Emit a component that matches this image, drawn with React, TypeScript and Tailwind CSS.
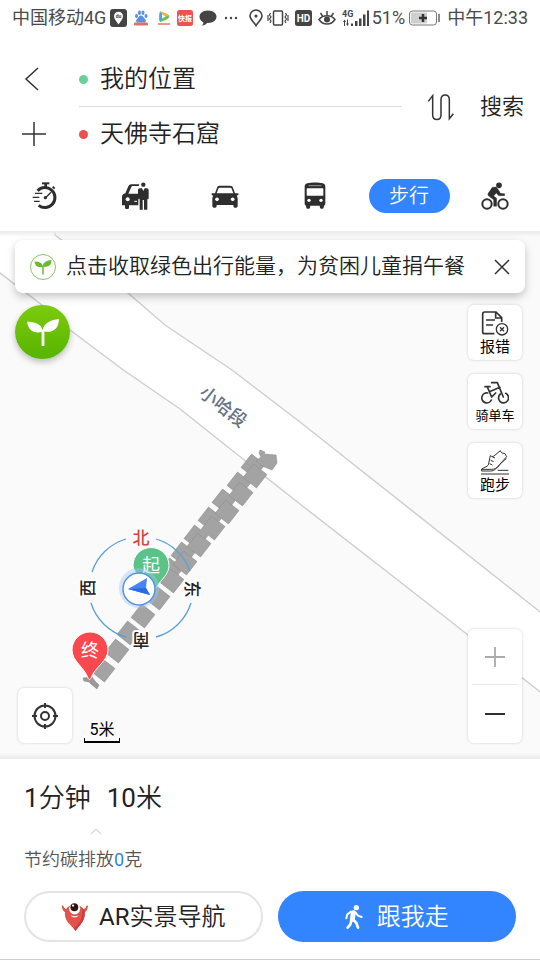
import type { ReactNode } from 'react';

const cjk = 'font-[Roboto,"Noto_Sans_CJK_SC",sans-serif]';

function StatusBar() {
  return (
    <div className="flex h-9 items-center pl-3 pr-3 text-lg leading-9 text-[#4a4a4a]">
      <span>中国移动4G</span>
      <svg className="ml-1 h-[18px] w-[17px]" viewBox="0 0 17 18">
        <rect width="17" height="18" rx="3" fill="#444" />
        <path d="M8.500 15.500C6.500 12 4 10 4 7.200a4.500 4.500 0 0 1 9 0C13 10 10.500 12 8.500 15.500Z" fill="#fff" />
        <text x="8.500" y="9" textAnchor="middle" fontSize="5" fontWeight="700" fill="#444">du</text>
      </svg>
      <svg className="ml-1.5 h-4 w-4" viewBox="0 0 16 16">
        <g fill="#5c8fe0">
          <ellipse cx="3.500" cy="6" rx="1.500" ry="2" />
          <ellipse cx="6.500" cy="2.800" rx="1.500" ry="2.200" />
          <ellipse cx="10" cy="2.800" rx="1.500" ry="2.200" />
          <ellipse cx="13" cy="6" rx="1.500" ry="2" />
          <path d="M8 5.500c2 0 2.500 2 4 3.500s1 3.500-1 3.500H5c-2 0-2.500-2-1-3.500S6 5.500 8 5.500Z" />
        </g>
        <rect x="1" y="12.500" width="14" height="3" rx="1" fill="#e2705f" />
      </svg>
      <svg className="ml-2 h-4 w-3.5" viewBox="0 0 14 16">
        <path d="M3 1.500C8 3 12 4.500 12.500 6.500 12 8.500 8 10.500 3 12c-1-3-1-7 0-10.500Z" fill="#63c04e" />
        <path d="M3 1.500C8 3 12 4.500 12.500 6.500L3 5Z" fill="#f0b04a" />
        <path d="M3 1.500c-1 3.500-1 7.500 0 10.500l2-4V4Z" fill="#4aa6e8" />
        <path d="M5 4.500v4L9 6.500Z" fill="#fff" />
        <rect x="1" y="13" width="12" height="2" fill="#ef9a86" />
      </svg>
      <svg className="ml-1.5 h-4 w-4" viewBox="0 0 16 16">
        <rect width="16" height="16" rx="2.500" fill="#ee5350" />
        <text x="8" y="11" textAnchor="middle" fontSize="7" fontWeight="700" fill="#fff">快报</text>
      </svg>
      <svg className="ml-1.5 h-4 w-[18px]" viewBox="0 0 18 16">
        <path d="M9 0.500c5 0 8.500 2.800 8.500 6.300S14 13 9 13H8c-1 1.500-3 2.600-5 2.500 1-1 1.500-2 1.300-3.300C2 11 .5 9.200.5 6.800.5 3.300 4 .5 9 .5Z" fill="#444" />
      </svg>
      <svg className="ml-1.5 h-1 w-4" viewBox="0 0 16 4" fill="#444">
        <circle cx="3" cy="2" r="1.200" />
        <circle cx="8" cy="2" r="1.200" />
        <circle cx="13" cy="2" r="1.200" />
      </svg>

      <svg className="ml-auto h-[18px] w-3.5" viewBox="0 0 14 18" fill="none" stroke="#444" strokeWidth="1.600">
        <path d="M7 16.500C4.500 12.500 1 10.500 1 7a6 6 0 0 1 12 0c0 3.500-3.500 5.500-6 9.500Z" />
        <circle cx="7" cy="7" r="1.600" fill="#444" stroke="none" />
      </svg>
      <svg className="ml-1 h-4 w-[22px]" viewBox="0 0 22 16" fill="none" stroke="#444" strokeWidth="1.500">
        <rect x="6.500" y="1" width="9" height="14" rx="1" />
        <path d="M3.500 3 2.500 5l1.500 2-1.500 2 1.500 2-1 2M1 5v6M18.500 3l1 2L18 7l1.500 2-1.500 2 1 2M21 5v6" strokeWidth="1.200" />
      </svg>
      <svg className="ml-1.5 h-4 w-[17px]" viewBox="0 0 17 16">
        <rect width="17" height="16" rx="2.500" fill="#444" />
        <text x="8.500" y="12" textAnchor="middle" fontSize="10" fontWeight="700" fill="#fff">HD</text>
      </svg>
      <svg className="ml-1.5 h-4 w-[18px]" viewBox="0 0 18 16" fill="none" stroke="#444" strokeWidth="1.500">
        <path d="M1 9.500C5 4.500 13 4.500 17 9.500 13 15.500 5 15.500 1 9.500ZM9 5V1M4.500 6 2.500 3M13.500 6l2-3" />
        <circle cx="9" cy="9.500" r="3" fill="#444" stroke="none" />
      </svg>
      <svg className="ml-1.5 h-[18px] w-7" viewBox="0 0 28 18" fill="#444">
        <text x="0" y="8" fontSize="9" fontWeight="700">4G</text>
        <path d="M1 13l1.500-2.500L4 13H3v4H2v-4ZM5 10.500h1v4h1L5.500 17 4 14.500h1ZM9 14.500h2V17H9ZM13 12h2.500v5H13ZM17 9.500h2.500V17H17ZM21 5.500h2.500V17H21ZM25 1.500h2V17h-2Z" />
      </svg>
      <span className="ml-0.5">51%</span>
      <svg className="ml-1 h-4 w-8" viewBox="0 0 32 16">
        <rect x="0.500" y="1" width="27" height="14" rx="3" fill="#fff" stroke="#777" />
        <rect x="2" y="2.500" width="16" height="11" rx="1" fill="#cfcfcf" />
        <path d="M14 4v8M10 8h8" stroke="#333" strokeWidth="2.500" />
        <path d="M30 4v8" stroke="#666" strokeWidth="1.500" />
      </svg>
      <span className="ml-1.5">中午12:33</span>
    </div>
  );
}

function TimerIcon() {
  return (
    <svg className="h-7 w-7" viewBox="93 397 84 84" fill="none" stroke="#2e2e2e">
      <path d="M113 423A30 30 0 1 1 116 467" strokeWidth="9" />
      <path d="M126 401h22" strokeWidth="6" />
      <path d="M137 402v10" strokeWidth="8" />
      <path d="M158 411l6 6" strokeWidth="6" />
      <path d="M137 444l16-16" strokeWidth="4" />
      <circle cx="136" cy="444" r="5" fill="#2e2e2e" stroke="none" />
      <path d="M105 431h22M98 443h20M102 455h17" strokeWidth="4" />
    </svg>
  );
}

function TaxiIcon() {
  return (
    <svg className="h-7 w-7" viewBox="360 397 84 84" fill="#2e2e2e">
      <path d="M415 404h-24c-5 0-7 2-9 6l-9 21c-6 2-10 5-10 11v25h9v8c0 4 12 4 12 0v-8h28V432h-30l9-20c1-2 2-3 4-3h18Z" />
      <circle cx="380" cy="449" r="6" fill="#fff" />
      <path d="M400 455h8" stroke="#fff" strokeWidth="3" />
      <circle cx="427" cy="405" r="6.500" />
      <path d="M417 416h6l4 8 4-8h6c4 0 6 2 6 6v24c0 4-4 4-4 0v34h-10v-29h-4v29h-9v-34c0 4-5 4-5 0v-24c0-4 2-6 6-6Z" />
    </svg>
  );
}

function CarIcon() {
  return (
    <svg className="h-7 w-7" viewBox="632 397 84 84" fill="#2e2e2e">
      <path fillRule="evenodd" d="M657 408h32c5 0 8 2 9 6l6 17h10v5l-5 2c2 3 3 5 3 9v21c0 8-13 8-13 0v-2h-50v2c0 8-13 8-13 0v-21c0-4 1-6 3-9l-5-2v-5h10l6-17c1-4 3-6 7-6Zm1 6c-2 0-3 1-4 3l-5 14h50l-5-14c-1-2-2-3-4-3Z" />
      <circle cx="650" cy="449" r="5.500" fill="#fff" />
      <circle cx="697" cy="449" r="5.500" fill="#fff" />
    </svg>
  );
}

function BusIcon() {
  return (
    <svg className="h-7 w-7" viewBox="93 397 84 84" fill="#2e2e2e">
      <path d="M112 401c12-3 34-3 46 0 6 2 8 5 8 10v50c0 4-1 6-4 7l-1 6c-1 4-10 4-11 0l-1-6h-28l-1 6c-1 4-10 4-11 0l-1-6c-3-1-4-3-4-7v-50c0-5 2-8 8-10Z" />
      <rect x="110" y="416" width="50" height="22" rx="2" fill="#fff" />
      <path d="M116 408h38" stroke="#fff" strokeWidth="1.500" />
      <circle cx="117" cy="452" r="5" fill="#fff" />
      <circle cx="153" cy="452" r="5" fill="#fff" />
    </svg>
  );
}

function BikeIcon() {
  return (
    <svg className="h-7 w-7" viewBox="632 397 84 84" fill="none" stroke="#2e2e2e" strokeLinejoin="round">
      <circle cx="650" cy="463" r="14" strokeWidth="6" />
      <circle cx="698" cy="463" r="14" strokeWidth="6" />
      <circle cx="686" cy="407" r="8.500" fill="#2e2e2e" stroke="none" />
      <path d="M666 413l12-1 9 13 3 6 13 1v6h-18l-7-8-8 9 9 7v24h-9v-20l-15-11c-3-3-3-6-1-9Z" fill="#2e2e2e" strokeWidth="1" />
    </svg>
  );
}

const modes: { name: string; icon: ReactNode }[] = [
  { name: '智能', icon: <TimerIcon /> },
  { name: '打车', icon: <TaxiIcon /> },
  { name: '驾车', icon: <CarIcon /> },
  { name: '公交', icon: <BusIcon /> },
  { name: '步行', icon: null },
  { name: '骑行', icon: <BikeIcon /> },
];

function Header() {
  return (
    <header className="relative z-10 bg-white">
      <StatusBar />
      <form className="flex items-center pt-4 pr-4" onSubmit={(e) => e.preventDefault()}>
        <div className="flex w-16 flex-col">
          <button type="button" aria-label="返回" className="flex h-[54px] items-center justify-center">
            <svg className="h-6 w-4" viewBox="0 0 16 24" fill="none" stroke="#333" strokeWidth="1.500">
              <path d="M14 1 2 12l12 11" />
            </svg>
          </button>
          <button type="button" aria-label="添加途经点" className="flex h-[55px] items-center justify-center pl-1">
            <svg className="h-6 w-6" viewBox="0 0 24 24" fill="none" stroke="#333" strokeWidth="1.500">
              <path d="M12 0v24M0 12h24" />
            </svg>
          </button>
        </div>
        <div className="ml-[15px] min-w-0 flex-1">
          <div className="flex h-[55px] items-center border-b border-[#dcdcdc]">
            <span className="h-[9px] w-[9px] rounded-full bg-[#6bcf97]" />
            <input aria-label="起点" defaultValue="我的位置" className="ml-3 min-w-0 flex-1 bg-transparent text-2xl font-[350] text-[#222] outline-none" />
          </div>
          <div className="flex h-[54px] items-center">
            <span className="h-[9px] w-[9px] rounded-full bg-[#ee4f4f]" />
            <input aria-label="终点" defaultValue="天佛寺石窟" className="ml-3 min-w-0 flex-1 bg-transparent text-2xl font-[350] text-[#222] outline-none" />
          </div>
        </div>
        <button type="button" aria-label="交换起终点" className="flex h-12 w-[78px] items-center justify-center">
          <svg className="h-7 w-7" viewBox="471 126 84 84" fill="none" stroke="#333" strokeWidth="4.500">
            <path d="M475 151l13-17v58c0 18 25 18 25 0v-46c0-19 25-19 25 0v57l12-15" />
          </svg>
        </button>
        <button type="submit" className="text-[22px] font-[350] text-[#222]">搜索</button>
      </form>
      <nav className="grid h-[70px] grid-cols-6 items-center justify-items-center">
        {modes.map((mode) =>
          mode.icon ? (
            <button key={mode.name} type="button" aria-label={mode.name}>{mode.icon}</button>
          ) : (
            <button key={mode.name} type="button" className="ml-2 h-[34px] w-[81px] rounded-full bg-[#3385ff] text-xl font-[350] text-white">
              {mode.name}
            </button>
          ),
        )}
      </nav>
    </header>
  );
}

const mainSteps = [
  [255, 476], [241, 494], [227, 512], [213, 528], [199, 545], [185, 563],
  [172, 581], [158, 598], [143, 616], [129, 633], [117, 651], [103, 670],
];
const sideSteps = [
  [253, 466], [239, 484], [224, 501], [210, 519], [196, 537], [183, 554], [171, 570],
];

function MapCanvas() {
  return (
    <svg className="absolute inset-0 h-full w-full" viewBox="0 231 540 528" preserveAspectRatio="xMidYMid slice">
      <rect y="231" width="540" height="528" fill="#fafafa" />
      <path
        d="M-4 270 42 305 70 330 122 369 180 409 243 459 300 504 440 613 468 635 544 695V615L525 600 300 422 232 370 165 325 128 293 63 241 55 235V225H-4Z"
        fill="#fff"
        stroke="#cfcfcf"
        strokeWidth="1.500"
      />
      <text transform="translate(223 407) rotate(38)" y="6" textAnchor="middle" fontSize="18" fontWeight="500" fill="#667385">小哈段</text>

      <g fill="#a3a3a3" stroke="#8f8f8f" strokeWidth="0.600">
        {sideSteps.map(([x, y]) => (
          <rect key={x} x="-8.500" y="-8.500" width="17" height="17" transform={`translate(${x} ${y}) rotate(38)`} />
        ))}
        {mainSteps.map(([x, y]) => (
          <rect key={x} x="-8.500" y="-8.500" width="17" height="17" transform={`translate(${x} ${y}) rotate(38)`} />
        ))}
        <path d="M260 450l5 2-1 2 12 1 1 8-5 7-10-4-6-5 5-4-2-4Z" />
        <path d="M83 678l9-1 3 4 4 4-2 4-6-5-2-2-5-1Z" fill="#999" />
      </g>

      <path d="M151 547.500a18 18 0 0 1 18 18c0 9-8 14-12 21-2 3-4 3-6 0-4-7-18-12-18-21a18 18 0 0 1 18-18Z" fill="#5bc388" stroke="#fff" />
      <text x="151" y="572" textAnchor="middle" fontSize="18" fill="#fff">起</text>

      <path
        d="M92 572A51 51 0 0 1 126 539M156 539A51 51 0 0 1 190 571M191 603A51 51 0 0 1 156 637M126 637A51 51 0 0 1 91 603"
        fill="none"
        stroke="#5a9fd6"
        strokeWidth="1.300"
      />
      <circle cx="139" cy="588" r="20" fill="#9cc9f0" fillOpacity="0.400" />
      <circle cx="139" cy="589" r="16" fill="#fff" stroke="#5593dd" strokeWidth="1.500" />
      <path d="M128 589l19-11-1 10 4 7Z" fill="#4585f5" />
      <path d="M128 589l18-1 4 7Z" fill="#2a6be4" />

      <g fontSize="17" fontWeight="500" textAnchor="middle" fill="#222" stroke="#fff" strokeWidth="4" paintOrder="stroke">
        <text x="141" y="544" fill="#e0403c">北</text>
        <text transform="translate(88 588) rotate(-90)" y="6">西</text>
        <text transform="translate(192 589) rotate(90)" y="6">东</text>
        <text transform="translate(141 640) rotate(180)" y="6">南</text>
      </g>

      <path d="M90 632a18 18 0 0 1 18 18c0 11-13 17-17 28-1 2-2 2-3 0-4-11-16-17-16-28a18 18 0 0 1 18-18Z" fill="#f9494f" stroke="#fff" />
      <text x="90" y="657" textAnchor="middle" fontSize="18" fill="#fff">终</text>
    </svg>
  );
}

function Sprout({ className }: { className: string }) {
  return (
    <svg className={className} viewBox="0 0 36 32" fill="currentColor">
      <path d="M1 5c8 0 15 2 16.500 9C19 6 26 3 35 2c0 9-5 15-15.500 13.500V31h-3V16C7 18 2 13 1 5Z" />
    </svg>
  );
}

const tools: { name: string; size: string; icon: ReactNode }[] = [
  {
    name: '报错',
    size: 'text-[15px]',
    icon: (
      <svg className="h-7 w-7" viewBox="124 240 84 84" fill="none" stroke="#333" strokeWidth="5">
        <path d="M164 311h-29c-4 0-6-2-6-6v-53c0-4 2-6 6-6h34l17 17v13M168 247v17h18M139 270h27M139 285h21" />
        <circle cx="187" cy="298" r="17" strokeWidth="4" />
        <path d="M181 292l12 12M193 292l-12 12" strokeWidth="4" />
      </svg>
    ),
  },
  {
    name: '骑单车',
    size: 'text-[13px]',
    icon: (
      <svg className="h-7 w-7" viewBox="123 446 84 84" fill="none" stroke="#333" strokeWidth="5" strokeLinecap="round">
        <path d="M143 488A15 15 0 1 0 154 509M181 491A15 15 0 1 0 197 489" />
        <path d="M135 469h15M142 470l13 30M148 484l32-13M155 500l12-12M155 457h17l18 43" />
      </svg>
    ),
  },
  {
    name: '跑步',
    size: 'text-[15px]',
    icon: (
      <svg className="h-7 w-7" viewBox="122 652 84 84" fill="none" stroke="#333" strokeWidth="3" strokeLinejoin="round">
        <path d="M180 660c2 6 6 9 13 8l6 10c-6 9-15 15-22 24-8 11-15 19-26 19h-27v-6c6-5 16-6 20-12l6-28c4 3 8 3 11 1Z" />
        <path d="M198 684c-8 6-15 12-22 21-7 9-15 11-22 11h-30M155 678l9 4M151 689l9 4M148 699l8 4" />
        <path d="M122 730h84M172 719h32" />
      </svg>
    ),
  },
];

function MapSection() {
  return (
    <main className="relative flex min-h-[528px] flex-1 flex-col px-[15px] pt-[9px] pb-4">
      <MapCanvas />
      <div className="absolute inset-x-0 top-0 h-1.5 bg-linear-to-b from-[#e9e9e9] to-transparent" />
      <div className="absolute inset-x-0 bottom-0 h-1.5 bg-linear-to-t from-[#e9e9e9] to-transparent" />

      <div className="relative flex h-[53px] items-center rounded-lg bg-white pl-[15px] pr-[15px] shadow-[0_4px_8px_rgba(0,0,0,0.22)]">
        <span className="flex h-[26px] w-[26px] shrink-0 items-center justify-center rounded-full border border-[#8bc26a] text-[#6ab92e]">
          <Sprout className="h-4 w-[18px]" />
        </span>
        <p className="ml-2.5 flex-1 whitespace-nowrap text-[21px] font-[350] text-[#222]">点击收取绿色出行能量，为贫困儿童捐午餐</p>
        <button type="button" aria-label="关闭">
          <svg className="h-4 w-4" viewBox="0 0 16 16" fill="none" stroke="#333" strokeWidth="1.500">
            <path d="M1 1l14 14M15 1 1 15" />
          </svg>
        </button>
      </div>

      <div className="relative mt-3 mr-[3px] flex items-start justify-between">
        <button type="button" aria-label="绿色出行" className="flex h-[54px] w-[55px] items-center justify-center rounded-full bg-linear-to-b from-[#7dcb0c] to-[#56b400] text-white shadow-[0_3px_6px_rgba(0,0,0,0.25)]">
          <Sprout className="h-[30px] w-[34px]" />
        </button>
        <div className="flex flex-col gap-3.5">
          {tools.map((tool) => (
            <button
              key={tool.name}
              type="button"
              className={`flex h-[55px] w-[54px] flex-col items-center justify-center rounded-md bg-white leading-[18px] text-black shadow-[0_0_3px_rgba(0,0,0,0.18)] ${tool.size}`}
            >
              {tool.icon}
              <span>{tool.name}</span>
            </button>
          ))}
        </div>
      </div>

      <div className="relative mx-[3px] mt-auto flex items-end">
        <button type="button" aria-label="定位" className="flex h-[55px] w-[54px] items-center justify-center rounded-md bg-white shadow-[0_0_3px_rgba(0,0,0,0.18)]">
          <svg className="h-[26px] w-[26px]" viewBox="0 0 26 26" fill="none" stroke="#333" strokeWidth="2">
            <circle cx="13" cy="13" r="10.500" />
            <circle cx="13" cy="13" r="4" />
            <path d="M13 0v5M13 21v5M0 13h5M21 13h5" />
          </svg>
        </button>
        <div className="ml-3 flex w-9 flex-col items-center text-base leading-4 text-black">
          <span>5米</span>
          <span className="h-[5px] w-full border-x border-b-2 border-black" />
        </div>
        <div className="ml-auto flex w-[54px] flex-col rounded-md bg-white px-1 shadow-[0_0_3px_rgba(0,0,0,0.18)]">
          <button type="button" aria-label="放大" className="flex h-14 items-center justify-center border-b border-[#e8e8e8]">
            <svg className="h-5 w-5" viewBox="0 0 20 20" stroke="#aaa" strokeWidth="1.800">
              <path d="M10 0v20M0 10h20" />
            </svg>
          </button>
          <button type="button" aria-label="缩小" className="flex h-[58px] items-center justify-center">
            <svg className="h-5 w-5" viewBox="0 0 20 20" stroke="#2e2e2e" strokeWidth="2">
              <path d="M0 10h20" />
            </svg>
          </button>
        </div>
      </div>
    </main>
  );
}

function Mascot() {
  return (
    <svg className="h-7 w-7" viewBox="185 398 84 86">
      <path d="M186 407c4-3 6 0 7 5l10 8-4 8c-7-4-11-9-13-21ZM267 407c-4-3-6 0-7 5l-9 8 4 8c7-4 10-9 12-21Z" fill="#d9574f" />
      <path d="M196 432c0-19 13-28 30-28s31 9 31 28c0 22-18 36-28 52-13-18-33-28-33-52Z" fill="#e2534b" />
      <path d="M249 412c5 5 8 11 8 20 0 22-18 36-28 52-2-3-4-5-6-8 20-16 30-36 26-64Z" fill="#c73e3a" />
      <circle cx="226" cy="416" r="17" fill="#fff" />
      <circle cx="225" cy="411" r="12" fill="#2d1715" />
      <circle cx="221" cy="406" r="3.500" fill="#fff" />
      <path d="M213 434c8 5 18 5 26 0-2 12-24 12-26 0Z" fill="#fff" stroke="#8e211e" />
    </svg>
  );
}

function WalkIcon() {
  return (
    <svg className="h-6 w-[18px]" viewBox="223 106 54 72" fill="none" stroke="#fff" strokeLinecap="round" strokeLinejoin="round">
      <circle cx="257" cy="114" r="8" fill="#fff" stroke="none" />
      <path d="M248 129l-3 20" strokeWidth="15" />
      <path d="M241 126l-11 8-3 12M255 129l7 9 11 4" strokeWidth="6" />
      <path d="M242 152l-3 12-8 10M248 150l9 10 5 14" strokeWidth="8" />
    </svg>
  );
}

function BottomPanel() {
  return (
    <footer className="border-b border-[#cfcfcf] bg-white px-6 pt-5 pb-[17px]">
      <h2 className="flex gap-4 text-[26px] leading-[38px] font-[350] text-[#222]">
        <span><span className="font-normal">1</span>分钟</span>
        <span><span className="font-normal">10</span>米</span>
      </h2>
      <button type="button" aria-label="展开" className="mt-2.5 ml-16 block">
        <svg className="h-2 w-4" viewBox="0 0 16 8" fill="none" stroke="#d9d9d9" strokeWidth="1.200">
          <path d="M3 7l5-5 5 5" />
        </svg>
      </button>
      <p className="mt-[13px] text-lg leading-6 font-[350] text-[#555]">
        节约碳排放<span className="font-normal text-[#2f86dd]">0</span>克
      </p>
      <div className="mt-[19px] grid grid-cols-2 gap-[15px]">
        <button type="button" className="flex h-[51px] items-center justify-center gap-2.5 rounded-full border-2 border-[#e4e4e4] text-2xl font-[350] text-[#222]">
          <Mascot />
          <span><span className="font-normal">AR</span>实景导航</span>
        </button>
        <button type="button" className="flex h-[51px] items-center justify-center gap-3.5 rounded-full bg-[#3385ff] text-2xl font-[350] text-white">
          <WalkIcon />
          <span>跟我走</span>
        </button>
      </div>
    </footer>
  );
}

export default function App() {
  return (
    <div lang="zh-CN" className={`flex min-h-screen flex-col bg-white ${cjk}`}>
      <Header />
      <MapSection />
      <BottomPanel />
    </div>
  );
}
